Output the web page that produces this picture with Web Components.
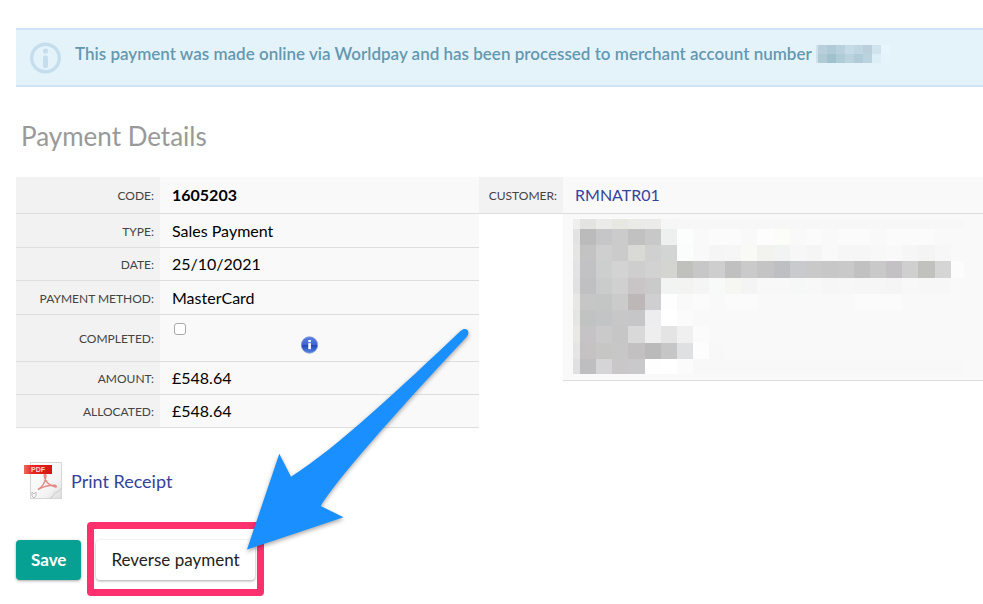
<!DOCTYPE html>
<html lang="en">
<head>
<meta charset="utf-8">
<meta name="viewport" content="width=device-width, initial-scale=1">
<title>Payment Details</title>
<style>
  body {
    margin: 0;
    background: #fff;
    color: #000;
    font-family: Lato, "Liberation Sans", sans-serif;
    font-size: 16px;
  }
</style>
</head>
<body>
<payment-page>
  <info-banner slot="banner">This payment was made online via Worldpay and has been processed to merchant account number</info-banner>
  <span slot="title">Payment Details</span>
  <payment-table slot="details">
    <b slot="code">1605203</b>
    <span slot="type">Sales Payment</span>
    <span slot="date">25/10/2021</span>
    <span slot="method">MasterCard</span>
    <span slot="amount">£548.64</span>
    <span slot="allocated">£548.64</span>
  </payment-table>
  <customer-table slot="details">RMNATR01</customer-table>
  <receipt-link slot="receipt">Print Receipt</receipt-link>
  <action-button slot="actions" variant="primary">Save</action-button>
  <callout-box slot="actions">
    <action-button>Reverse payment</action-button>
  </callout-box>
</payment-page>

<script>
const TABLE_STYLES = `
  table {
    width: 100%;
    border-collapse: separate;
    border-spacing: 0;
  }
  th, td {
    box-sizing: border-box;
    height: 33px;
    padding: 0;
    border-bottom: 1px solid #dedede;
    vertical-align: middle;
  }
  th {
    width: var(--label-width);
    padding-right: 6px;
    background: #f2f2f2;
    color: #444;
    font-size: 12px;
    font-weight: 400;
    line-height: 16px;
    padding-top: 2px;
    text-align: right;
    text-transform: uppercase;
    white-space: nowrap;
  }
  td {
    padding-left: 12px;
    background: #f9f9f9;
    line-height: 20px;
  }
  .first th, .first td { height: 37px; }
  .tall th, .tall td { height: 47px; }
  .mid th, .mid td { height: 34px; }
`;

class PaymentPage extends HTMLElement {
  constructor() {
    super();
    const shadow = this.attachShadow({ mode: 'open' });

    shadow.innerHTML = `
      <style>
        :host {
          display: block;
          padding: 28px 0 24px 16px;
        }
        h1 {
          margin: 33px 0 25px 5px;
          color: #999;
          font-size: 26px;
          font-weight: 400;
          line-height: 32px;
        }
        .details {
          display: flex;
          align-items: flex-start;
        }
        .receipt {
          padding: 34px 0 40px 8px;
        }
        .actions {
          display: flex;
          gap: 15px;
        }
      </style>

      <slot name="banner"></slot>
      <h1><slot name="title"></slot></h1>
      <div class="details"><slot name="details"></slot></div>
      <div class="receipt"><slot name="receipt"></slot></div>
      <div class="actions"><slot name="actions"></slot></div>
    `;
  }
}

class InfoBanner extends HTMLElement {
  constructor() {
    super();
    const shadow = this.attachShadow({ mode: 'open' });

    shadow.innerHTML = `
      <style>
        :host {
          display: flex;
          align-items: center;
          gap: 14px;
          box-sizing: border-box;
          min-height: 59px;
          padding: 0 14px;
          border: solid #cfe5f7;
          border-width: 2px 0;
          background: #e4f3fa;
          color: #6598b0;
          font-size: 17px;
          font-weight: 600;
          line-height: 20px;
        }
        .icon {
          flex: none;
          width: 31px;
          height: 32px;
        }
        p {
          display: flex;
          align-items: center;
          gap: 4px;
          margin: 0 0 8px;
        }
        pixel-mask { flex: none; }
      </style>

      <svg class="icon" viewBox="0 0 31 32" aria-hidden="true">
        <circle cx="15.500" cy="16" r="13.800" fill="none" stroke="#c5deed" stroke-width="3.400"/>
        <circle cx="15.500" cy="9" r="2.600" fill="#c5deed"/>
        <rect x="13" y="13.500" width="5" height="12.500" rx="2" fill="#c5deed"/>
      </svg>
      <p><slot></slot><pixel-mask data="account"></pixel-mask></p>
    `;
  }
}

// Cell edges and colours for each redacted area, "." leaves a cell empty.
const MASKS = {
  account: {
    cols: [0, 2, 11, 20, 29, 38, 47, 56, 65, 74],
    rows: [0, 9, 18],
    cells: [
      'd0e3ec b9d0dc b0cad7 b8d1dd c5dbe6 c0d6e1 bacfdb d0e4ed e7f6fd',
      'cfe2eb b0cbd6 a0c2cf b0ccd8 bad3df b1ccd9 bbd3df dceef6 e5f4fc'
    ]
  },
  customer: {
    cols: [0, 7, 23, 39, 55, 72, 88, 104, 120, 136, 152, 168, 184, 201, 217, 233, 249, 265, 281, 297, 313, 329, 345, 362, 378, 391],
    rows: [0, 10, 26, 42, 59, 75, 91, 107, 124, 140, 155],
    cells: [
      'efefed e3e4e2 ebebe9 e8e8e3 eaeae6 ebebe9 f6f6f6 f7f7f7 f7f7f7 f7f7f7 f7f7f7 f7f7f7 f7f7f7 f7f7f7 f7f7f7 f7f7f7 f7f7f7 f7f7f7 f7f7f7 f7f7f7 f7f7f7 f7f7f7 f7f7f7 f7f7f7 f7f7f7',
      'e3e3e3 bbbbbb c6c6c9 cbcbcb c1c1c1 c8c8c8 eef0ef fcfdfd . fbfbfb fbfbfb . fdfdfd fcfcf9 . fbfbfb . fbfbfb fbfbfb . fbfbfb fbfbfb fbfbfb . .',
      'e5e5e4 c3c3c3 cfcfcf cbcbcb d9d9d6 d0d0d0 d2d5d4 fafdfc . f5f5f5 f6f6f6 f9f9f6 f2f2ef f2f4f3 f7f7f7 f5f5f5 f9f9f9 f6f6f6 f6f6f6 f8f8f8 . f6f6f6 f4f4f4 f7f7f7 .',
      'e3e3e3 c2c2c5 cdcfce d3d3d3 cecece d2d2d2 d4d4d1 c0c0bd c7c7c7 cecece c0c0c0 cacaca c4c4c4 bdbfc2 c9cacd c9c9c9 c7c7c7 c9c9c9 c1c1c1 c9c9c9 c4c1c5 cecfce c1c1be d5d5d5 fcfcfc',
      'e1e1e1 c0c0c2 cacccb d0d0d0 c9c5c7 cacaca f2f4f3 f3f3f2 f5f5f5 f8faf9 f6f6f3 f4f4f4 f8f8f8 f8f8f8 f6f8f7 f8f8f8 f6f6f6 f7f7f7 f6f6f6 f6f6f6 f5f5f5 f8f8f8 f7f7f7 f7f7f7 .',
      'e7e7e5 c5c6c5 c4c6c5 cbcbcb bdb7b8 cfcfd2 fefefe f9f9f9 fbfbfb . fbfbfb fbfbfb . . . . . . fbfbfb fbfbfb fbfbfb . . . .',
      'e5e5e4 c1c3c2 c2c4c5 c7c7c7 c6c6c9 ededef ffffff fbfbfb . . . . . . . . . . . . . . . . .',
      'e8e8e5 c5c3c6 cacaca c6c6c6 d9d9d9 eeeeee e4e4e4 f0f0f0 fbfbfb . . . . . . . . . . . . . . . .',
      'e6e5e5 c6c2c3 c6c6c5 c7c7c7 c3c0c1 bababa c6c6c6 dfe0e2 fdfdfd f8f8f8 . . . . . . . . . . . . . . .',
      'e0e0e0 bebec0 d5d5d7 cac7c8 c9c9cb fefefe ffffff fbfbfb f8f8f8 f8f8f8 f8f8f8 f8f8f8 f8f8f8 f8f8f8 f8f8f8 f8f8f8 f8f8f8 f8f8f8 f8f8f8 f8f8f8 f8f8f8 f8f8f8 f8f8f8 f8f8f8 f8f8f8'
    ]
  }
};

class PixelMask extends HTMLElement {
  connectedCallback() {
    const { cols, rows, cells } = MASKS[this.getAttribute('data')];
    const width = cols[cols.length - 1];
    const height = rows[rows.length - 1];
    let rects = '';

    cells.forEach((line, r) => {
      line.split(' ').forEach((color, c) => {
        if (color === '.') return;
        rects += `<rect x="${cols[c]}" y="${rows[r]}" width="${cols[c + 1] - cols[c]}" height="${rows[r + 1] - rows[r]}" fill="#${color}"/>`;
      });
    });

    this.attachShadow({ mode: 'open' }).innerHTML = `
      <style>
        :host { display: block; }
        svg { display: block; }
      </style>
      <svg width="${width}" height="${height}" shape-rendering="crispEdges" aria-hidden="true">${rects}</svg>
    `;
  }
}

class PaymentTable extends HTMLElement {
  constructor() {
    super();
    const shadow = this.attachShadow({ mode: 'open' });

    shadow.innerHTML = `
      <style>
        ${TABLE_STYLES}
        :host {
          --label-width: 144px;
          display: block;
          flex: 463 1 0;
        }
        .completed {
          display: grid;
          grid-template-columns: 129px auto;
          justify-content: start;
          height: 32px;
        }
        input {
          appearance: none;
          box-sizing: border-box;
          width: 12px;
          height: 12px;
          margin: 1px 2px;
          border: 1px solid #a8a8a8;
          border-radius: 3px;
          background: #fff;
        }
        input:checked { background: #3b5fd0; }
        .info {
          align-self: end;
          width: 18px;
          height: 18px;
        }
      </style>

      <table>
        <tr class="first"><th scope="row">Code:</th><td><slot name="code"></slot></td></tr>
        <tr class="mid"><th scope="row">Type:</th><td><slot name="type"></slot></td></tr>
        <tr><th scope="row">Date:</th><td><slot name="date"></slot></td></tr>
        <tr class="mid"><th scope="row">Payment method:</th><td><slot name="method"></slot></td></tr>
        <tr class="tall">
          <th scope="row"><label for="completed">Completed:</label></th>
          <td>
            <div class="completed">
              <input type="checkbox" id="completed">
              <svg class="info" viewBox="0 0 18 18" role="img" aria-label="More information">
                <defs>
                  <linearGradient id="ball" x1="0" y1="0" x2="0" y2="1">
                    <stop offset="0" stop-color="#5a7fe0"/>
                    <stop offset="0.480" stop-color="#3f66d2"/>
                    <stop offset="0.520" stop-color="#2348b8"/>
                    <stop offset="1" stop-color="#5685ee"/>
                  </linearGradient>
                </defs>
                <circle cx="8.500" cy="9" r="8.200" fill="url(#ball)" stroke="#8296d2" stroke-width="0.800"/>
                <rect x="7.300" y="4" width="2.600" height="2.200" fill="#fff"/>
                <path d="M7.300 7.200h2.600v6h-2.600z" fill="#fff"/>
              </svg>
            </div>
          </td>
        </tr>
        <tr><th scope="row">Amount:</th><td><slot name="amount"></slot></td></tr>
        <tr><th scope="row">Allocated:</th><td><slot name="allocated"></slot></td></tr>
      </table>
    `;
  }
}

class CustomerTable extends HTMLElement {
  constructor() {
    super();
    const shadow = this.attachShadow({ mode: 'open' });

    shadow.innerHTML = `
      <style>
        ${TABLE_STYLES}
        :host {
          --label-width: 84px;
          display: block;
          flex: 504 1 0;
        }
        a {
          color: #36439b;
          text-decoration: none;
        }
        .blank {
          border: 0;
          background: none;
        }
        .address { padding: 5px 0 6px 10px; }
      </style>

      <table>
        <tr class="first"><th scope="row">Customer:</th><td><a href="#customer"><slot></slot></a></td></tr>
        <tr><td class="blank"></td><td class="address"><pixel-mask data="customer"></pixel-mask></td></tr>
      </table>
    `;
  }
}

class ReceiptLink extends HTMLElement {
  constructor() {
    super();
    const shadow = this.attachShadow({ mode: 'open' });

    shadow.innerHTML = `
      <style>
        :host { display: flex; }
        a {
          display: flex;
          align-items: center;
          gap: 8px;
          color: #36439b;
          font-size: 18px;
          line-height: 24px;
          text-decoration: none;
        }
        svg { width: 39px; height: 38px; }
      </style>

      <a href="#receipt">
        <svg viewBox="0 0 39 38" aria-hidden="true">
          <defs>
            <linearGradient id="paper" x1="0" y1="0" x2="1" y2="1">
              <stop offset="0" stop-color="#fff"/>
              <stop offset="0.700" stop-color="#f3f3f3"/>
              <stop offset="1" stop-color="#dcdcdc"/>
            </linearGradient>
            <linearGradient id="flag" x1="0" y1="0" x2="1" y2="0">
              <stop offset="0" stop-color="#f06a60"/>
              <stop offset="0.300" stop-color="#e5261f"/>
              <stop offset="1" stop-color="#d81410"/>
            </linearGradient>
          </defs>
          <path d="M6.500 .5h31v36h-31z" fill="url(#paper)" stroke="#d6d6d6"/>
          <path d="M26 36.500l11.500-10.500c-1 3-4 4-7.500 4.500c0 3-1 4-4 6z" fill="#fff" stroke="#ccc" stroke-width=".8"/>
          <path d="M14 27.500c5-3 7.500-8.500 8-13.500c.2-2-2-2-1.800 0c.6 5 5 10 11.300 11c1.200 0 1-1.700-.6-1.800c-6-.2-12 1.500-16.900 4.300z" fill="none" stroke="#e58a87" stroke-width="1.500"/>
          <path d="M8 30l2 2 2-2v4l-2 2-2-2z" fill="none" stroke="#c0c0c0" stroke-width="1"/>
          <path d="M0 3h28v9h-28z" fill="url(#flag)"/>
          <text x="14" y="10" text-anchor="middle" font-family="Liberation Sans, sans-serif" font-size="7" font-weight="700" fill="#fbd5d2">PDF</text>
        </svg>
        <slot></slot>
      </a>
    `;
  }
}

class ActionButton extends HTMLElement {
  constructor() {
    super();
    const shadow = this.attachShadow({ mode: 'open' });

    shadow.innerHTML = `
      <style>
        :host {
          --button-bg: #fff;
          --button-color: #222;
          --button-weight: 400;
          display: block;
        }
        :host([variant="primary"]) {
          --button-bg: #06a192;
          --button-color: #fff;
          --button-weight: 700;
        }
        button {
          display: block;
          height: 40px;
          padding: 0 15px;
          border: 0;
          border-radius: 4px;
          background: var(--button-bg);
          box-shadow: 0 1px 3px rgba(0, 0, 0, 0.35);
          color: var(--button-color);
          font: var(--button-weight) 17px/24px Lato, "Liberation Sans", sans-serif;
          white-space: nowrap;
          cursor: pointer;
        }
      </style>

      <button type="button"><slot></slot></button>
    `;
  }
}

class CalloutBox extends HTMLElement {
  constructor() {
    super();
    const shadow = this.attachShadow({ mode: 'open' });

    shadow.innerHTML = `
      <style>
        :host {
          display: block;
          position: relative;
        }
        .frame {
          position: absolute;
          inset: -18px -9px -16px -9px;
          border: 7px solid #ff306e;
          border-radius: 4px;
          pointer-events: none;
        }
        .arrow {
          position: absolute;
          right: -220px;
          bottom: 20px;
          width: 240px;
          height: 240px;
          overflow: visible;
          pointer-events: none;
          filter: drop-shadow(0 2px 2px rgba(0, 0, 0, 0.35));
        }
      </style>

      <slot></slot>
      <div class="frame"></div>
      <svg class="arrow" viewBox="235 320 240 240" aria-hidden="true">
        <path d="M247 549.500L279.300 453.700L291 476.700C338 447 400 388 460.500 331C466 326 471 331 467 336.500C416 391 341 473 320.700 506L343.500 517.300Z" fill="#1a8fff"/>
      </svg>
    `;
  }
}

customElements.define('pixel-mask', PixelMask);
customElements.define('info-banner', InfoBanner);
customElements.define('payment-table', PaymentTable);
customElements.define('customer-table', CustomerTable);
customElements.define('receipt-link', ReceiptLink);
customElements.define('action-button', ActionButton);
customElements.define('callout-box', CalloutBox);
customElements.define('payment-page', PaymentPage);
</script>
</body>
</html>
